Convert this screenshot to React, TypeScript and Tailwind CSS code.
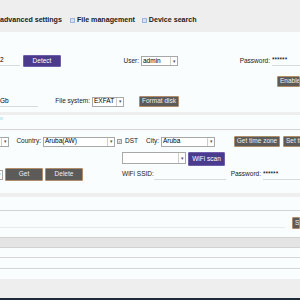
import type { FC, ReactNode } from 'react';

const font = { fontFamily: '"Liberation Sans", Arial, sans-serif' };

const GrayButton: FC<{ w: string; children: ReactNode; h?: string; left?: boolean }> = ({
  w,
  children,
  h = 'h-[11px]',
  left = false,
}) => (
  <div
    className={`${w} ${h} shrink-0 flex items-center ${left ? 'justify-start pl-[2px]' : 'justify-center'} rounded-[1px] border border-[#b08d6a] bg-[#5d5b59] text-[6.5px] text-[#eeeeee] leading-none whitespace-nowrap overflow-hidden`}
  >
    {children}
  </div>
);

const PurpleButton: FC<{ w: string; children: ReactNode; h?: string }> = ({ w, children, h = 'h-[12px]' }) => (
  <div
    className={`${w} ${h} shrink-0 flex items-center justify-center rounded-[1px] border border-[#6d5fa8] bg-[#4a3b8d] text-[6.5px] text-white leading-none whitespace-nowrap`}
  >
    {children}
  </div>
);

const Select: FC<{ w: string; text?: string; h?: string }> = ({ w, text = '', h = 'h-[10px]' }) => (
  <div className={`${w} ${h} shrink-0 flex border border-[#a8a8a8] bg-white`}>
    <div className="flex-1 flex items-center px-[1px] text-[6.5px] leading-none text-black overflow-hidden whitespace-nowrap">
      {text}
    </div>
    <div className="w-[7px] flex items-center justify-center border-l border-[#cfcfcf] text-[5px] leading-none text-[#555]">
      ▾
    </div>
  </div>
);

const Label: FC<{ w: string; children: ReactNode }> = ({ w, children }) => (
  <div className={`${w} shrink-0 text-right pr-[2px] text-[6.5px] leading-none text-[#222] whitespace-nowrap`}>
    {children}
  </div>
);

const Line: FC<{ w: string; text?: string }> = ({ w, text = '' }) => (
  <div className={`${w} shrink-0 h-[10px] flex items-center border-b border-[#d6dbdc] text-[6.5px] leading-none text-black overflow-hidden whitespace-nowrap`}>
    {text}
  </div>
);

const TabIcon = () => <div className="w-[5px] h-[5px] shrink-0 border border-[#9fb5dd] bg-[#d4e1f5]" />;

export default function App() {
  return (
    <div className="w-[300px] h-[300px] overflow-hidden bg-[#f9fdfd] flex flex-col" style={font}>
      {/* tabs */}
      <div className="h-[32px] shrink-0 bg-[#eeeeee] flex items-center pt-[8px] text-[7.1px] font-bold text-[#222] whitespace-nowrap">
        <span>advanced settings</span>
        <div className="ml-[8px] mr-[2px]"><TabIcon /></div>
        <span>File management</span>
        <div className="ml-[7px] mr-[2px]"><TabIcon /></div>
        <span>Device search</span>
      </div>

      {/* storage section */}
      <div className="h-[80px] shrink-0">
        <div className="mt-[23px] h-[12px] flex items-center">
          <Line w="w-[20px]" text="2" />
          <div className="ml-[3px]">
            <PurpleButton w="w-[38px]">Detect</PurpleButton>
          </div>
          <Label w="w-[80px]">User:</Label>
          <Select w="w-[37px]" text="admin" />
          <Label w="w-[94px]">Password:</Label>
          <Line w="w-[28px]" text="******" />
        </div>
        <div className="mt-[9px] h-[11px] flex pl-[277px]">
          <GrayButton w="w-[23px]" left>Enable</GrayButton>
        </div>
        <div className="mt-[9px] h-[11px] flex items-center">
          <Line w="w-[38px]" text="Gb" />
          <Label w="w-[54px]">File system:</Label>
          <Select w="w-[32px]" text="EXFAT" />
          <div className="ml-[15px]">
            <GrayButton w="w-[40px]">Format disk</GrayButton>
          </div>
        </div>
      </div>

      <div className="h-[3px] shrink-0 bg-[#eeeeee]" />

      {/* time / wifi section */}
      <div className="h-[78px] shrink-0">
        <div className="h-[15px] border-b border-[#d3d3d3] flex items-start">
          <div className="mt-[2px] w-[3px] h-[3px] bg-[#cfeef4]" />
        </div>
        <div className="mt-[6px] h-[11px] flex items-center">
          <div className="-ml-[20px]">
            <Select w="w-[29px]" />
          </div>
          <Label w="w-[34px]">Country:</Label>
          <Select w="w-[72px]" text="Aruba(AW)" />
          <div className="ml-[2px] w-[5px] h-[5px] border border-[#9a9a9a] bg-[#eeeeee] flex items-center justify-center text-[4px] leading-none text-[#555]">
            ✓
          </div>
          <span className="ml-[3px] text-[6.5px] leading-none text-[#222]">DST</span>
          <Label w="w-[23px]">City:</Label>
          <Select w="w-[54px]" text="Aruba" />
          <div className="ml-[19px]">
            <GrayButton w="w-[46px]">Get time zone</GrayButton>
          </div>
          <div className="ml-[3px]">
            <GrayButton w="w-[19px]" left>Set ti</GrayButton>
          </div>
        </div>
        <div className="mt-[5px] h-[14px] flex items-start pl-[122px]">
          <Select w="w-[64px]" h="h-[12px]" />
          <div className="ml-[2px]">
            <PurpleButton w="w-[37px]" h="h-[14px]">WiFi scan</PurpleButton>
          </div>
        </div>
        <div className="mt-[2px] h-[13px] flex items-center">
          <div className="-ml-[26px]">
            <Select w="w-[29px]" />
          </div>
          <div className="ml-[2px]">
            <GrayButton w="w-[38px]" h="h-[13px]">Get</GrayButton>
          </div>
          <div className="ml-[2px]">
            <GrayButton w="w-[38px]" h="h-[13px]">Delete</GrayButton>
          </div>
          <div className="ml-[39px] w-[33px] text-[6.5px] leading-none text-[#222] whitespace-nowrap">WiFi SSID:</div>
          <Line w="w-[72px]" />
          <Label w="w-[37px]">Password:</Label>
          <Line w="w-[37px]" text="******" />
        </div>
      </div>

      <div className="h-[4px] shrink-0 bg-[#efefef]" />

      {/* list section */}
      <div className="h-[40px] shrink-0">
        <div className="h-[14px] border-b border-[#d3d3d3]" />
        <div className="mt-[6px] h-[12px] flex items-start">
          <div className="w-[285px] h-[11px] border-b border-[#e6ecee]" />
          <div className="ml-[7px]">
            <GrayButton w="w-[8px]" h="h-[12px]" left>S</GrayButton>
          </div>
        </div>
      </div>

      {/* table */}
      <div className="h-[11px] shrink-0 bg-[#e4e4e4] border-y border-[#d2d2d2]" />
      <div className="h-[10px] shrink-0 border-b border-[#d6d6d6]" />
      <div className="h-[11px] shrink-0 border-b border-[#d6d6d6]" />
      <div className="h-[10px] shrink-0" />

      <div className="flex-1 bg-[#eeeeee]" />
      <div className="h-[2px] shrink-0 bg-[#1e2a38]" />
    </div>
  );
}
